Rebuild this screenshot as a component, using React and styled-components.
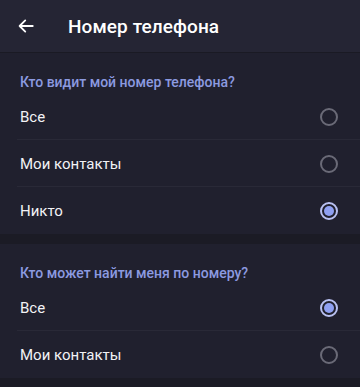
import React from 'react';
import styled, { createGlobalStyle } from 'styled-components';

const Global = createGlobalStyle`
  html, body { margin: 0; padding: 0; background: #1b1b25; }
  body { font-family: Roboto, "Noto Sans", sans-serif; -webkit-font-smoothing: antialiased; }
`;

const Screen = styled.div`
  width: 360px;
  height: 387px;
  overflow: hidden;
  background: #1b1b25;
  display: flex;
  flex-direction: column;
`;

const Header = styled.div`
  height: 52px;
  display: flex;
  align-items: center;
  background: #252534;
  border-bottom: 1px solid #1a1a24;
  flex-shrink: 0;
`;

const BackButton = styled.div`
  width: 52px;
  height: 52px;
  display: flex;
  align-items: center;
  justify-content: center;
  color: #ffffff;
`;

const Title = styled.div`
  margin-left: 16px;
  color: #ffffff;
  font-size: 19px;
  font-weight: 500;
  letter-spacing: 0.1px;
`;

const Section = styled.div`
  background: #20202e;
  padding-top: 12px;
  margin-bottom: ${props => props.gap ? '10px' : '0'};
`;

const SectionTitle = styled.div`
  color: #8c9ae0;
  font-size: 14px;
  font-weight: 500;
  padding: 9px 20px 0;
  height: 19px;
`;

const Row = styled.div`
  height: 47px;
  display: flex;
  align-items: center;
  justify-content: space-between;
  padding: 0 22px 0 20px;
  position: relative;
  ${props => props.divider && `
    &::after {
      content: '';
      position: absolute;
      left: 17px;
      right: 0;
      bottom: 0;
      height: 1px;
      background: #292937;
    }
  `}
`;

const Label = styled.div`
  color: #f2f2f5;
  font-size: 15px;
`;

const Radio = styled.div`
  width: 18px;
  height: 18px;
  box-sizing: border-box;
  border-radius: 50%;
  border: 2px solid ${props => props.checked ? '#b9c1f2' : '#6a6a77'};
  display: flex;
  align-items: center;
  justify-content: center;
  &::before {
    content: '';
    display: ${props => props.checked ? 'block' : 'none'};
    width: 10px;
    height: 10px;
    border-radius: 50%;
    background: #8fa0f2;
  }
`;

function Option({ label, checked, divider }) {
  return (
    <Row divider={divider}>
      <Label>{label}</Label>
      <Radio checked={checked} />
    </Row>
  );
}

export default function App() {
  return (
    <Screen>
      <Global />
      <Header>
        <BackButton>
          <svg width="18" height="18" viewBox="0 0 24 24" fill="none" stroke="#fff" strokeWidth="2.4" strokeLinecap="round" strokeLinejoin="round">
            <path d="M21 12H3.5M11 4.5L3.5 12l7.5 7.5" />
          </svg>
        </BackButton>
        <Title>Номер телефона</Title>
      </Header>
      <Section gap>
        <SectionTitle>Кто видит мой номер телефона?</SectionTitle>
        <Option label="Все" divider />
        <Option label="Мои контакты" divider />
        <Option label="Никто" checked />
      </Section>
      <Section>
        <SectionTitle>Кто может найти меня по номеру?</SectionTitle>
        <Option label="Все" checked divider />
        <Option label="Мои контакты" />
      </Section>
    </Screen>
  );
}
